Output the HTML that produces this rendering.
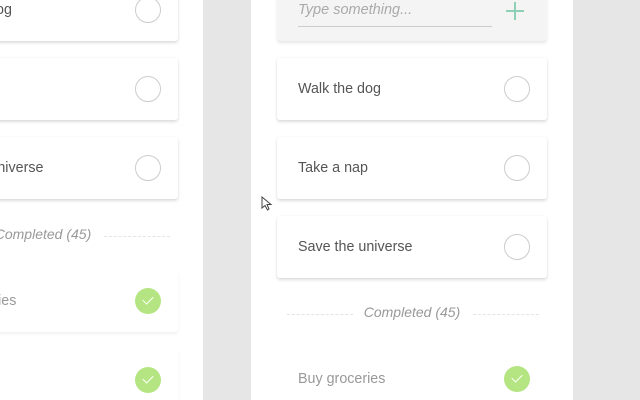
<!DOCTYPE html>
<html><head><meta charset="utf-8"><style>
*{margin:0;padding:0;box-sizing:border-box}
body{width:640px;height:400px;overflow:hidden;background:#e6e6e6;position:relative;font-family:"Liberation Sans",sans-serif;color:#555}
.panel{position:absolute;top:0;height:400px;background:#fff;overflow:hidden}
.col{position:absolute;width:270px}
.card{position:absolute;left:0;width:270px;height:62px;background:#fff;border-radius:3px;box-shadow:0 2px 3px rgba(0,0,0,.13),0 0 2px rgba(0,0,0,.05)}
.card .t{position:absolute;left:21px;top:23px;font-size:14.3px;color:#555}
.card .c{position:absolute;right:17px;top:18px;width:26px;height:26px;border-radius:50%;border:1px solid #ccc}
.done .t{color:#999}
.done{box-shadow:none}
.done .c{border:none;background:#b5e582}
.done .c:after{content:"";position:absolute;left:8px;top:8px;width:9px;height:5px;border-left:1.5px solid #fff;border-bottom:1.5px solid #fff;transform:rotate(-45deg)}
.inp{position:absolute;left:0;top:-40px;width:270px;height:81px;background:#f4f4f4;border-radius:4px;box-shadow:0 2px 3px rgba(0,0,0,.1)}
.inp .ph{position:absolute;left:21px;top:42px;font-size:14.5px;font-style:italic;color:#aaa}
.inp .ln{position:absolute;left:21px;top:66px;width:194px;height:1px;background:#ccc}
.inp .pl{position:absolute;left:229px;top:42px;width:18px;height:18px}
.inp .pl:before{content:"";position:absolute;left:8px;top:0;width:2px;height:18px;background:#8fcfb3}
.inp .pl:after{content:"";position:absolute;left:0;top:8px;width:18px;height:2px;background:#8fcfb3}
.comp{position:absolute;left:0;width:270px;height:20px;text-align:center;font-size:14px;font-style:italic;color:#999}
.comp:before,.comp:after{content:"";position:absolute;top:10px;width:66px;border-top:1px dashed #e4e4e4}
.comp:before{left:10px}.comp:after{right:8px}
</style></head><body>
<div class="panel" style="left:0;width:203px">
 <div class="col" style="left:-92px;top:-79px">
  <div class="inp"></div>
  <div class="card" style="top:58px"><span class="t">Walk the dog</span><span class="c"></span></div>
  <div class="card" style="top:137px"><span class="t">Take a nap</span><span class="c"></span></div>
  <div class="card" style="top:216px"><span class="t">Save the universe</span><span class="c"></span></div>
  <div class="comp" style="top:305px">Completed (45)</div>
  <div class="card done" style="top:349px;box-shadow:0 2px 3px rgba(0,0,0,.06)"><span class="t">Buy groceries</span><span class="c"></span></div>
  <div class="card done" style="top:428px;box-shadow:0 2px 3px rgba(0,0,0,.06)"><span class="t">Call mom</span><span class="c"></span></div>
 </div>
</div>
<div class="panel" style="left:251px;width:322px">
 <div class="col" style="left:26px;top:0">
  <div class="inp"><span class="ph">Type something...</span><span class="ln"></span><span class="pl"></span></div>
  <div class="card" style="top:58px"><span class="t">Walk the dog</span><span class="c"></span></div>
  <div class="card" style="top:137px"><span class="t">Take a nap</span><span class="c"></span></div>
  <div class="card" style="top:216px"><span class="t">Save the universe</span><span class="c"></span></div>
  <div class="comp" style="top:304px">Completed (45)</div>
  <div class="card done" style="top:348px"><span class="t">Buy groceries</span><span class="c"></span></div>
 </div>
</div>
<svg style="position:absolute;left:261px;top:196px" width="14" height="16" viewBox="0 0 14 16"><path d="M1 1 L1 12 L4 9.5 L6.5 14 L8 13 L6 8.5 L10 8.5 Z" fill="#fff" stroke="#444" stroke-width="1"/></svg>
</body></html>
